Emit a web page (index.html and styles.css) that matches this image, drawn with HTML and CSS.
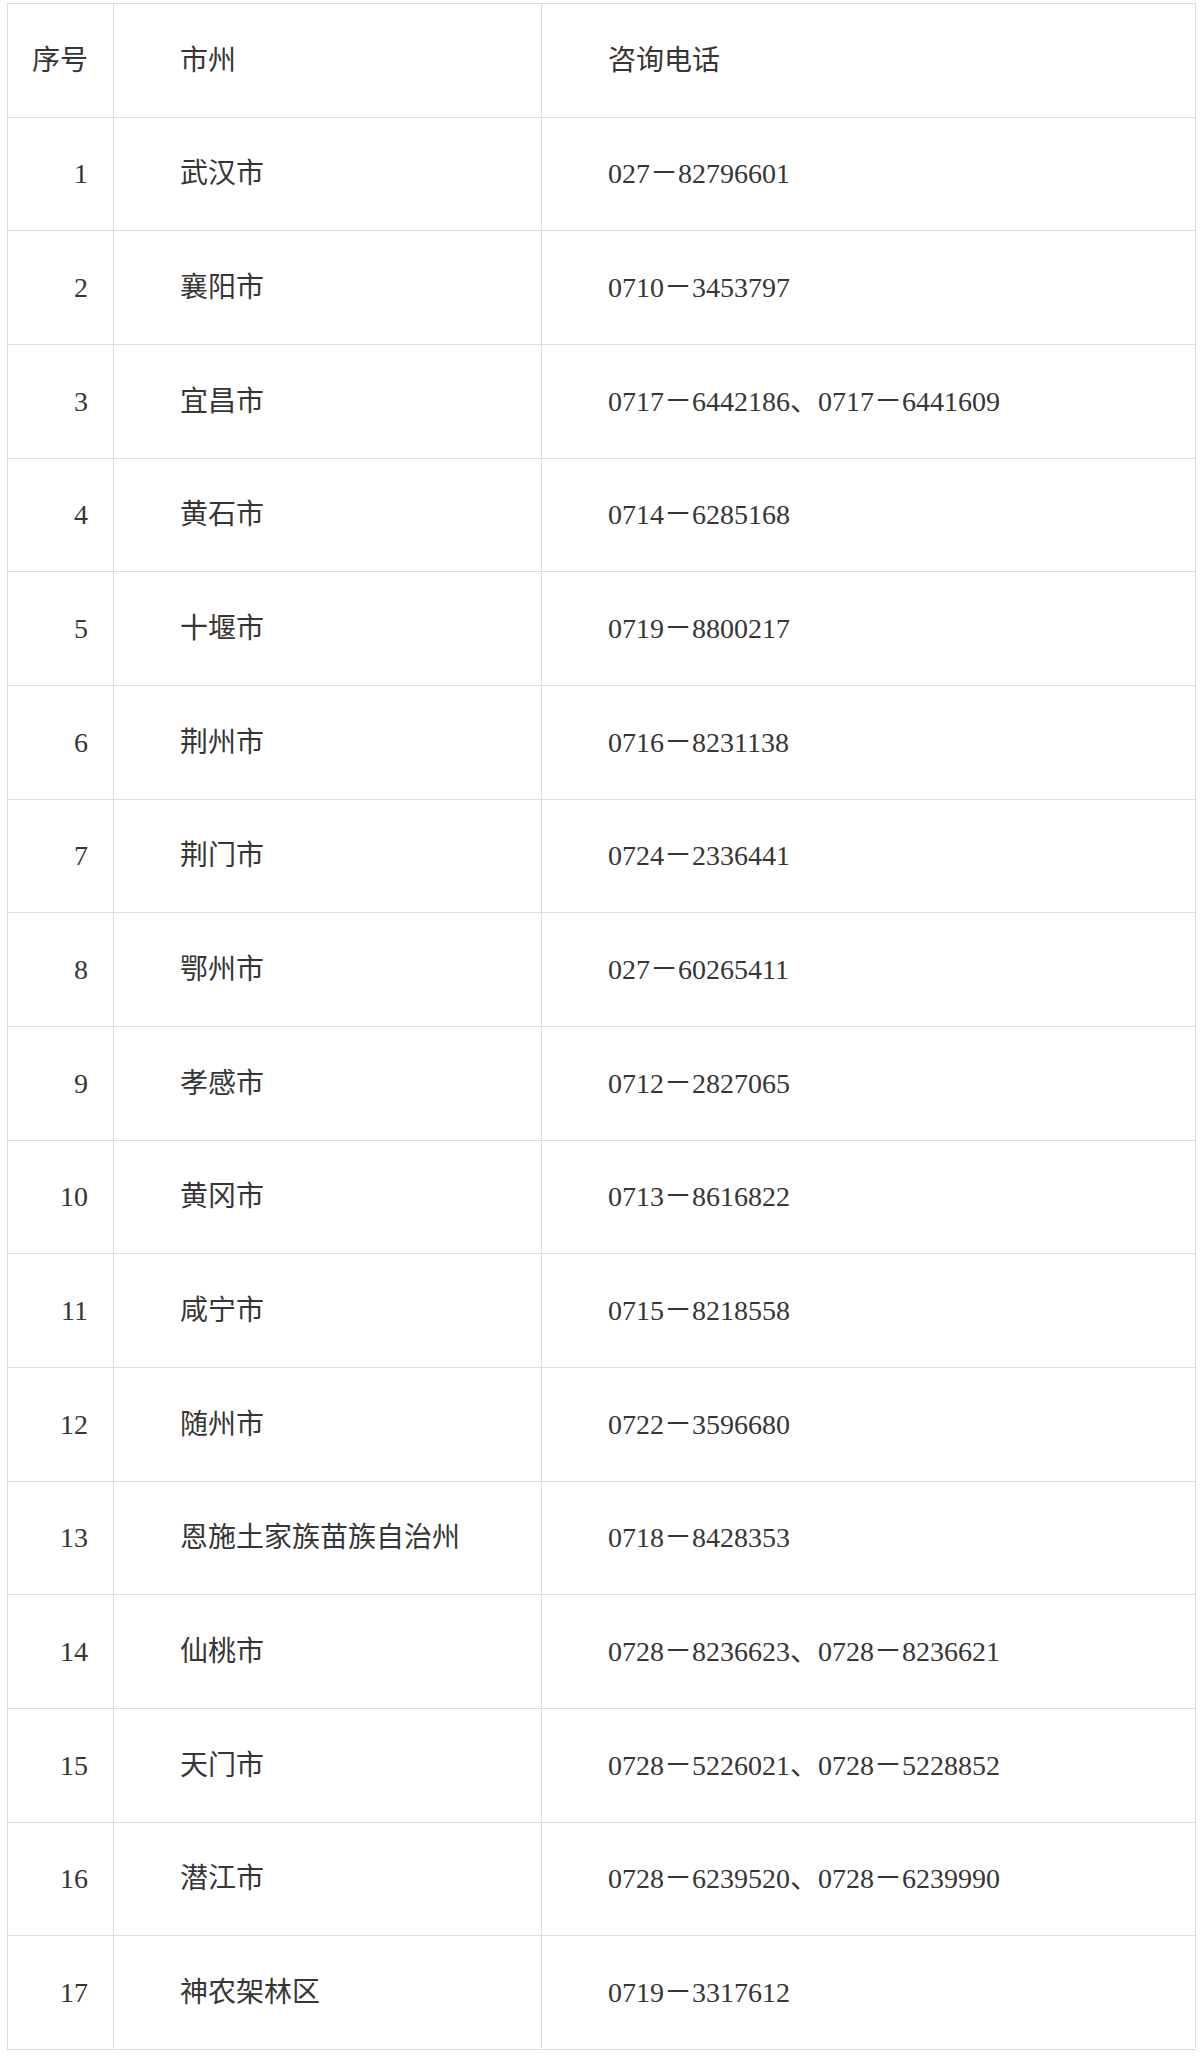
FILE: index.html
```html
<!DOCTYPE html>
<html lang="zh-CN">
<head>
<meta charset="utf-8">
<title>咨询电话</title>
<link rel="stylesheet" href="styles.css">
</head>
<body>
<table class="contact-table">
  <colgroup>
    <col class="col-no">
    <col class="col-city">
    <col class="col-phone">
  </colgroup>
  <tbody>
    <tr><td class="no">序号</td><td class="txt">市州</td><td class="txt">咨询电话</td></tr>
    <tr><td class="no">1</td><td class="txt">武汉市</td><td class="txt">027－82796601</td></tr>
    <tr><td class="no">2</td><td class="txt">襄阳市</td><td class="txt">0710－3453797</td></tr>
    <tr><td class="no">3</td><td class="txt">宜昌市</td><td class="txt">0717－6442186、0717－6441609</td></tr>
    <tr><td class="no">4</td><td class="txt">黄石市</td><td class="txt">0714－6285168</td></tr>
    <tr><td class="no">5</td><td class="txt">十堰市</td><td class="txt">0719－8800217</td></tr>
    <tr><td class="no">6</td><td class="txt">荆州市</td><td class="txt">0716－8231138</td></tr>
    <tr><td class="no">7</td><td class="txt">荆门市</td><td class="txt">0724－2336441</td></tr>
    <tr><td class="no">8</td><td class="txt">鄂州市</td><td class="txt">027－60265411</td></tr>
    <tr><td class="no">9</td><td class="txt">孝感市</td><td class="txt">0712－2827065</td></tr>
    <tr><td class="no">10</td><td class="txt">黄冈市</td><td class="txt">0713－8616822</td></tr>
    <tr><td class="no">11</td><td class="txt">咸宁市</td><td class="txt">0715－8218558</td></tr>
    <tr><td class="no">12</td><td class="txt">随州市</td><td class="txt">0722－3596680</td></tr>
    <tr><td class="no">13</td><td class="txt">恩施土家族苗族自治州</td><td class="txt">0718－8428353</td></tr>
    <tr><td class="no">14</td><td class="txt">仙桃市</td><td class="txt">0728－8236623、0728－8236621</td></tr>
    <tr><td class="no">15</td><td class="txt">天门市</td><td class="txt">0728－5226021、0728－5228852</td></tr>
    <tr><td class="no">16</td><td class="txt">潜江市</td><td class="txt">0728－6239520、0728－6239990</td></tr>
    <tr><td class="no">17</td><td class="txt">神农架林区</td><td class="txt">0719－3317612</td></tr>
  </tbody>
</table>
</body>
</html>
```

FILE: styles.css
```css
html, body {
  margin: 0;
  padding: 0;
  background: #ffffff;
}

body {
  padding: 3px 0 0 7px;
  font-family: "Liberation Serif", "Noto Sans CJK SC", sans-serif;
  font-size: 28px;
  color: #363636;
}

.contact-table {
  width: 1188px;
  border-collapse: collapse;
  table-layout: fixed;
}

.col-no { width: 106px; }
.col-city { width: 428px; }
.col-phone { width: 654px; }

.contact-table tr {
  height: 113.67px;
}

.contact-table td {
  border: 1px solid #dcdcdc;
  padding: 0 10px;
  vertical-align: middle;
  line-height: 1.4;
  white-space: nowrap;
}

.contact-table td.no {
  text-align: right;
  padding-right: 25px;
}

.contact-table td.txt {
  text-align: left;
  text-indent: 2em;
}
```
